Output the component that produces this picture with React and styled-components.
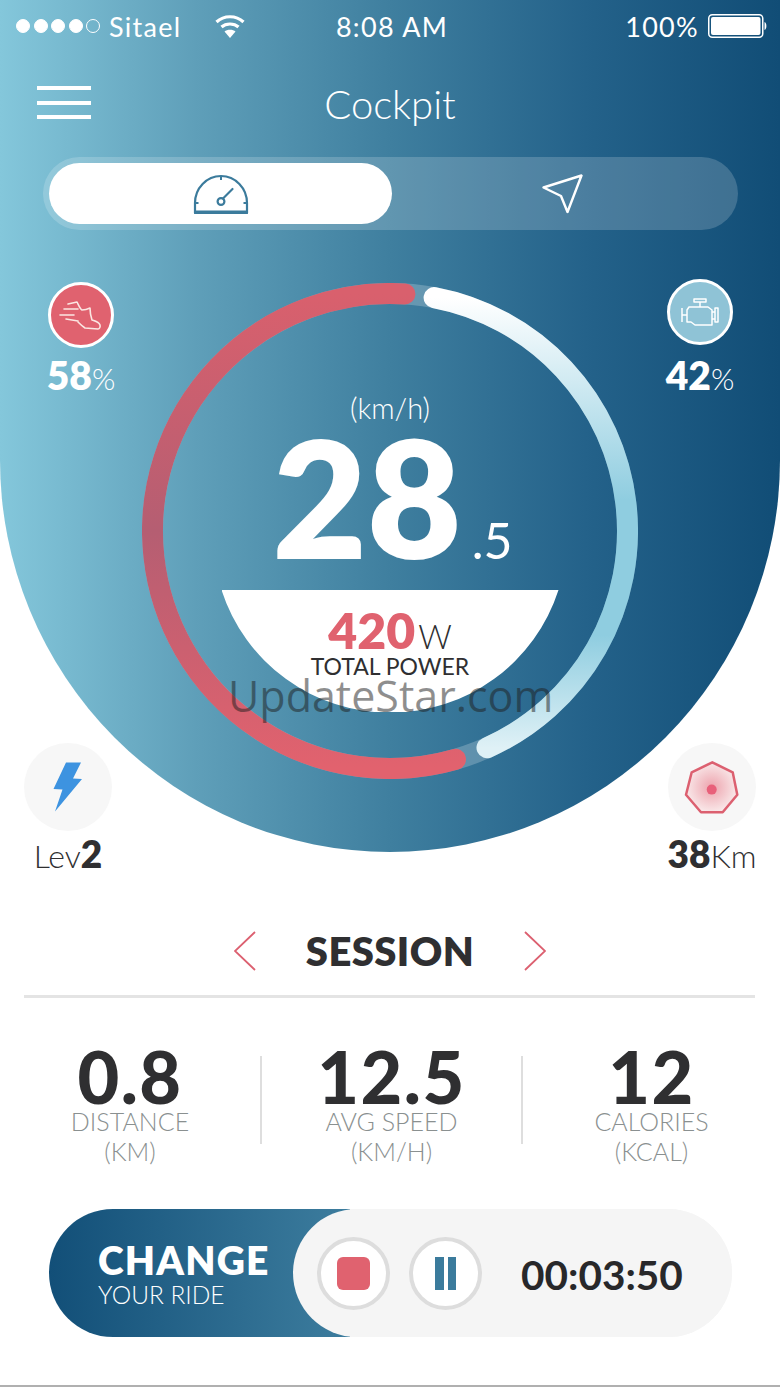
import styled, { createGlobalStyle } from 'styled-components';

const GlobalStyle = createGlobalStyle`
  html, body {
    margin: 0;
    padding: 0;
    background: #fff;
  }
  * {
    box-sizing: border-box;
  }
`;

const FONT = `Lato, "Open Sans", sans-serif`;
const RED = '#e0626f';
const DARK = '#2f2f31';
const TEAL = '#3b7b9c';

const Screen = styled.div`
  position: relative;
  width: 780px;
  height: 1387px;
  overflow: hidden;
  background: #fff;
  font-family: ${FONT};
  border-bottom: 2px solid #b0b0b0;
`;

const Hero = styled.section`
  height: 852px;
  color: #fff;
  background: linear-gradient(90deg, #84c7db 0%, #5f9fb9 25%, #3f7f9f 50%, #24628a 75%, #114d76 100%);
  border-radius: 0 0 390px 390px / 0 0 392px 392px;
`;

const StatusBar = styled.div`
  display: grid;
  grid-template-columns: 1fr auto 1fr;
  align-items: center;
  height: 52px;
  padding: 0 12px 0 16px;
  font-size: 27px;
  font-weight: 400;
  letter-spacing: 1.3px;
`;

const StatusLeft = styled.div`
  display: flex;
  align-items: center;
`;

const StatusRight = styled.div`
  display: flex;
  align-items: center;
  justify-content: flex-end;
  gap: 9px;
`;

const SignalDots = styled.div`
  display: flex;
  gap: 3.5px;
  margin-right: 9px;
`;

const SignalDot = styled.span`
  width: 14px;
  height: 14px;
  border-radius: 50%;
  border: 1.5px solid #fff;
  background: ${(p) => (p.$on ? '#fff' : 'transparent')};
`;

const WifiIcon = styled.svg`
  margin-left: 33px;
`;

const Header = styled.header`
  display: grid;
  grid-template-columns: 1fr auto 1fr;
  align-items: start;
  height: 105px;
  padding-top: 30px;
`;

const Hamburger = styled.div`
  display: flex;
  flex-direction: column;
  gap: 10.5px;
  width: 54px;
  margin: 4px 0 0 37px;
`;

const HamburgerBar = styled.span`
  height: 4px;
  background: #fff;
`;

const Title = styled.h1`
  margin: 0;
  font-size: 40px;
  line-height: 44px;
  font-weight: 300;
`;

const Tabs = styled.div`
  display: grid;
  grid-template-columns: 343px 1fr;
  height: 73px;
  margin: 0 42px 0 43px;
  padding: 6px;
  border-radius: 37px;
  background: rgba(255, 255, 255, 0.18);
`;

const Tab = styled.div`
  display: flex;
  align-items: center;
  justify-content: center;
  border-radius: 31px;
  background: ${(p) => (p.$active ? '#fff' : 'transparent')};
`;

const GaugeRow = styled.div`
  display: grid;
  grid-template-columns: 118px 496px 118px;
  height: 592px;
  margin-top: 53px;
  padding: 0 24px;
`;

const SideColumn = styled.div`
  display: flex;
  flex-direction: column;
  justify-content: space-between;
  align-items: ${(p) => (p.$right ? 'flex-end' : 'flex-start')};
`;

const PowerStat = styled.div`
  display: flex;
  flex-direction: column;
  align-items: center;
  width: 70px;
  margin: ${(p) => (p.$right ? '-4px 21px 0 0' : '-1px 0 0 22px')};
`;

const PowerBadge = styled.div`
  display: flex;
  align-items: center;
  justify-content: center;
  width: 66px;
  height: 66px;
  border-radius: 50%;
  border: 3px solid #fff;
  background: ${(p) => p.$color};
`;

const PowerValue = styled.div`
  margin-top: ${(p) => (p.$right ? '7px' : '4px')};
  font-size: 39px;
  line-height: 46px;
  font-weight: 800;
  white-space: nowrap;
`;

const Unit = styled.span`
  font-size: ${(p) => p.$size || 30}px;
  font-weight: 300;
`;

const RideStat = styled.div`
  display: flex;
  flex-direction: column;
  align-items: center;
  width: 88px;
`;

const RideBadge = styled.div`
  display: flex;
  align-items: center;
  justify-content: center;
  width: 88px;
  height: 88px;
  border-radius: 50%;
  background: #f7f7f7;
`;

const RideValue = styled.div`
  margin-top: 4px;
  color: ${DARK};
  font-size: 37px;
  line-height: 38px;
  font-weight: 800;
  white-space: nowrap;
`;

const Dial = styled.div`
  position: relative;
  display: flex;
  flex-direction: column;
  align-items: center;
  width: 496px;
  height: 496px;
  padding-top: 110px;
`;

const DialRing = styled.svg`
  position: absolute;
  top: 0;
  left: 0;
`;

const SpeedUnit = styled.div`
  position: relative;
  font-size: 29px;
  line-height: 30px;
  font-weight: 300;
`;

const Speed = styled.div`
  position: relative;
  margin-top: 8px;
  padding-left: 5px;
  font-size: 163px;
  line-height: 130px;
  font-weight: 800;
  white-space: nowrap;
`;

const SpeedDecimal = styled.span`
  margin-left: 10px;
  font-size: 50px;
  line-height: 0;
  font-weight: 400;
`;

const Bowl = styled.div`
  position: relative;
  display: flex;
  flex-direction: column;
  align-items: center;
  width: 337px;
  height: 122px;
  margin-top: 29px;
  padding-top: 13px;
  background: #fff;
  clip-path: path('M0 0 H337 A177 177 0 0 1 0 0 Z');
`;

const BowlValue = styled.div`
  color: ${RED};
  font-size: 50px;
  line-height: 54px;
  font-weight: 800;
  white-space: nowrap;
`;

const BowlUnit = styled.span`
  margin-left: 3px;
  color: ${DARK};
  font-size: 33px;
  line-height: 0;
  font-weight: 300;
`;

const BowlLabel = styled.div`
  margin-top: -4px;
  color: ${DARK};
  font-size: 23px;
  line-height: 26px;
`;

const Watermark = styled.div`
  position: absolute;
  top: 669px;
  left: 228px;
  color: rgba(30, 30, 30, 0.5);
  font-family: "Open Sans", sans-serif;
  font-size: 43px;
  line-height: 54px;
  white-space: nowrap;
`;

const SessionHeader = styled.div`
  display: flex;
  align-items: center;
  justify-content: center;
  gap: 50px;
  height: 42px;
  margin-top: 78px;
`;

const SessionTitle = styled.h2`
  margin: 0;
  color: ${DARK};
  font-size: 40px;
  line-height: 42px;
  font-weight: 800;
  letter-spacing: 0.4px;
`;

const Divider = styled.div`
  height: 3px;
  margin: 23px 25px 0 24px;
  background: #e4e4e4;
`;

const StatsGrid = styled.div`
  display: grid;
  grid-template-columns: 260px 2px 259px 2px 257px;
  margin-top: 48px;
`;

const StatSeparator = styled.div`
  height: 88px;
  margin-top: 10px;
  background: #dedede;
`;

const Stat = styled.div`
  display: flex;
  flex-direction: column;
  align-items: center;
`;

const StatValue = styled.div`
  color: ${DARK};
  font-size: 72px;
  line-height: 60px;
  font-weight: 900;
  letter-spacing: 1.5px;
`;

const StatLabel = styled.div`
  color: #8a9090;
  font-size: 25px;
  line-height: 30px;
  font-weight: 300;
`;

const RideBar = styled.div`
  display: flex;
  width: 683px;
  height: 128px;
  margin: 43px 0 0 49px;
  border-radius: 64px;
  background: linear-gradient(90deg, #124f78 0%, #3d7d9e 44%, #f5f5f5 44%);
`;

const ChangeRide = styled.div`
  display: flex;
  flex-direction: column;
  justify-content: center;
  flex: 0 0 244px;
  padding: 4px 0 0 49px;
  color: #fff;
`;

const ChangeTitle = styled.div`
  font-size: 39px;
  line-height: 40px;
  font-weight: 800;
  letter-spacing: 1.2px;
`;

const ChangeSub = styled.div`
  font-size: 24.5px;
  line-height: 30px;
  font-weight: 300;
`;

const ControlPill = styled.div`
  display: flex;
  align-items: center;
  flex: 1;
  padding-left: 24px;
  gap: 19px;
  border-radius: 64px;
  background: #f5f5f5;
`;

const RoundButton = styled.div`
  display: flex;
  align-items: center;
  justify-content: center;
  gap: 4px;
  width: 73px;
  height: 73px;
  border-radius: 50%;
  border: 4px solid #dddddd;
  background: #fff;
`;

const StopMark = styled.span`
  width: 33px;
  height: 33px;
  border-radius: 6px;
  background: ${RED};
`;

const PauseMark = styled.span`
  width: 8.5px;
  height: 33px;
  background: ${TEAL};
`;

const Timer = styled.div`
  margin: 3px 0 0 20px;
  color: #28282a;
  font-size: 40.5px;
  font-weight: 700;
`;

const CX = 248;
const CY = 248;
const R = 237.5;

// angle is clockwise from the top of the ring
const polar = (deg) => {
  const a = (deg * Math.PI) / 180;
  return [CX + R * Math.sin(a), CY - R * Math.cos(a)];
};

const arcPath = (from, to) => {
  const [x1, y1] = polar(from);
  const [x2, y2] = polar(to);
  const large = Math.abs(to - from) > 180 ? 1 : 0;
  return `M${x1} ${y1} A${R} ${R} 0 ${large} ${to > from ? 1 : 0} ${x2} ${y2}`;
};

const Speedometer = () => (
  <svg width="56" height="40" viewBox="0 0 56 40" fill="none" stroke={TEAL} strokeWidth="2.2">
    <path d="M2 39 V29 A26 27 0 0 1 54 29 V39 Z" strokeLinejoin="round" />
    <path d="M2 37.8 H54" strokeWidth="2.6" />
    <path d="M28 2 V6 M2 29 H5.5 M54 29 H50.5" strokeWidth="2" />
    <circle cx="28" cy="27.5" r="3.4" />
    <path d="M30 24.5 L39.5 15" strokeLinecap="round" />
  </svg>
);

const NavArrow = () => (
  <svg width="41" height="40" viewBox="0 0 41 40" fill="none" stroke="#fff" strokeWidth="2.4" strokeLinejoin="round">
    <path d="M39.5 1.5 L1.5 13.5 L19 22 L25.5 38 Z" />
  </svg>
);

const ShoeIcon = () => (
  <svg width="60" height="60" viewBox="3 3 60 60" fill="none" stroke="#fbe6e2" strokeWidth="1.6" strokeLinecap="round" strokeLinejoin="round">
    <path d="M20 22 L29 20 C31 24 32 27 34 28 C37 28 40 27 42 26 C42 31 43 35 44 38 C47 39 51 40 52 43 C52.5 45 51.5 47 50 47 L37 46 C34 44 32 42 30 40" />
    <path d="M16 27 L30 27 M12 33 L26 33 M18 37 L30 39" />
  </svg>
);

const EngineIcon = () => (
  <svg width="60" height="60" viewBox="3 3 60 60" fill="none" stroke="#fff" strokeWidth="1.5" strokeLinejoin="round">
    <path d="M27 20 H39 V23 H27 Z M33 23 V28" />
    <path d="M22 28 H41 L45 31 V46 H28 L24 43 H20 V31 Z" />
    <path d="M15 29 V43 M15 36 H20 M45 33 H48 M48 29 H51 V43 H48 Z M45 40 H48" />
  </svg>
);

const BoltIcon = () => (
  <svg width="30" height="50" viewBox="0 0 30 50" fill="#3d93e0">
    <path d="M13 0.5 H28 L20 16.5 L29 17 L2 49.5 L9.5 27.5 L0.5 27 Z" strokeLinejoin="round" />
  </svg>
);

const RangeIcon = () => (
  <svg width="88" height="88" viewBox="0 0 88 88" fill="none">
    <defs>
      <radialGradient id="rangeGlow">
        <stop offset="0%" stopColor="#eda3ad" />
        <stop offset="100%" stopColor="#f9e8e9" />
      </radialGradient>
    </defs>
    <path
      d="M44.3 19.3 L64.7 29.3 L69.3 51.7 L54.7 69.3 L33 69.3 L18 51.7 L23.7 29.3 Z"
      fill="url(#rangeGlow)"
      stroke="#dc6070"
      strokeWidth="2.5"
      strokeLinejoin="round"
    />
    <circle cx="43.7" cy="46.6" r="5" fill="#e8607a" />
  </svg>
);

const Chevron = ({ right }) => (
  <svg width="22" height="40" viewBox="0 0 22 40" fill="none" stroke="#dc6070" strokeWidth="1.8">
    <path d={right ? 'M1 1 L21 20 L1 39' : 'M21 1 L1 20 L21 39'} />
  </svg>
);

const stats = [
  { value: '0.8', label: 'DISTANCE', unit: '(KM)' },
  { value: '12.5', label: 'AVG SPEED', unit: '(KM/H)' },
  { value: '12', label: 'CALORIES', unit: '(KCAL)' },
];

const StatColumn = ({ index, stat }) => (
  <>
    {index > 0 && <StatSeparator />}
    <Stat>
      <StatValue>{stat.value}</StatValue>
      <StatLabel>{stat.label}</StatLabel>
      <StatLabel>{stat.unit}</StatLabel>
    </Stat>
  </>
);

const App = () => {
  return (
    <Screen>
      <GlobalStyle />
      <Hero>
        <StatusBar>
          <StatusLeft>
            <SignalDots>
              {[true, true, true, true, false].map((on, i) => (
                <SignalDot key={i} $on={on} />
              ))}
            </SignalDots>
            Sitael
            <WifiIcon width="30" height="24" viewBox="0 0 30 24" fill="none" stroke="#fff" strokeWidth="3.2">
              <path d="M1.5 8 C9 1 21 1 28.5 8" />
              <path d="M6.5 13 C11 9 19 9 23.5 13" />
              <path d="M15 24 L9.5 17.5 C12 15 18 15 20.5 17.5 Z" fill="#fff" stroke="none" />
            </WifiIcon>
          </StatusLeft>
          <div>8:08 AM</div>
          <StatusRight>
            100%
            <svg width="60" height="24" viewBox="0 0 60 24" fill="none">
              <rect x="0.75" y="0.75" width="54" height="22.5" rx="3.5" stroke="#fff" strokeWidth="1.5" />
              <rect x="3" y="3" width="49.5" height="18" rx="2" fill="#fff" />
              <path d="M56.5 8 C59 8.5 59 15.5 56.5 16 Z" fill="#fff" />
            </svg>
          </StatusRight>
        </StatusBar>
        <Header>
          <Hamburger>
            <HamburgerBar />
            <HamburgerBar />
            <HamburgerBar />
          </Hamburger>
          <Title>Cockpit</Title>
        </Header>
        <Tabs>
          <Tab $active>
            <Speedometer />
          </Tab>
          <Tab>
            <NavArrow />
          </Tab>
        </Tabs>
        <GaugeRow>
          <SideColumn>
            <PowerStat>
              <PowerBadge $color={RED}>
                <ShoeIcon />
              </PowerBadge>
              <PowerValue>
                58<Unit>%</Unit>
              </PowerValue>
            </PowerStat>
            <RideStat>
              <RideBadge>
                <BoltIcon />
              </RideBadge>
              <RideValue>
                <Unit $size={32}>Lev</Unit>2
              </RideValue>
            </RideStat>
          </SideColumn>
          <Dial>
            <DialRing width="496" height="496" viewBox="0 0 496 496" fill="none">
              <defs>
                <linearGradient id="redArc" x1="0" y1="0" x2="0" y2="1">
                  <stop offset="0%" stopColor="#d9606d" />
                  <stop offset="50%" stopColor="#b55e72" />
                  <stop offset="100%" stopColor="#e2626e" />
                </linearGradient>
                <linearGradient id="whiteArc" x1="0" y1="0" x2="0" y2="1">
                  <stop offset="0%" stopColor="#ffffff" />
                  <stop offset="45%" stopColor="#8fcde0" />
                  <stop offset="75%" stopColor="#8fcde0" />
                  <stop offset="100%" stopColor="#dff1f6" />
                </linearGradient>
              </defs>
              <circle cx={CX} cy={CY} r={R} stroke="rgba(255,255,255,0.22)" strokeWidth="21" />
              <path d={arcPath(3.6, -196)} stroke="url(#redArc)" strokeWidth="21" strokeLinecap="round" />
              <path d={arcPath(10.7, 155.9)} stroke="url(#whiteArc)" strokeWidth="21" strokeLinecap="round" />
            </DialRing>
            <SpeedUnit>(km/h)</SpeedUnit>
            <Speed>
              28<SpeedDecimal>.5</SpeedDecimal>
            </Speed>
            <Bowl>
              <BowlValue>
                420<BowlUnit>W</BowlUnit>
              </BowlValue>
              <BowlLabel>TOTAL POWER</BowlLabel>
            </Bowl>
          </Dial>
          <SideColumn $right>
            <PowerStat $right>
              <PowerBadge $color="#8fc3d6">
                <EngineIcon />
              </PowerBadge>
              <PowerValue $right>
                42<Unit>%</Unit>
              </PowerValue>
            </PowerStat>
            <RideStat>
              <RideBadge>
                <RangeIcon />
              </RideBadge>
              <RideValue>
                38<Unit $size={32}>Km</Unit>
              </RideValue>
            </RideStat>
          </SideColumn>
        </GaugeRow>
      </Hero>
      <Watermark>UpdateStar.com</Watermark>
      <SessionHeader>
        <Chevron />
        <SessionTitle>SESSION</SessionTitle>
        <Chevron right />
      </SessionHeader>
      <Divider />
      <StatsGrid>
        {stats.map((s, i) => (
          <StatColumn key={s.label} index={i} stat={s} />
        ))}
      </StatsGrid>
      <RideBar>
        <ChangeRide>
          <ChangeTitle>CHANGE</ChangeTitle>
          <ChangeSub>YOUR RIDE</ChangeSub>
        </ChangeRide>
        <ControlPill>
          <RoundButton>
            <StopMark />
          </RoundButton>
          <RoundButton>
            <PauseMark />
            <PauseMark />
          </RoundButton>
          <Timer>00:03:50</Timer>
        </ControlPill>
      </RideBar>
    </Screen>
  );
};

export default App;
